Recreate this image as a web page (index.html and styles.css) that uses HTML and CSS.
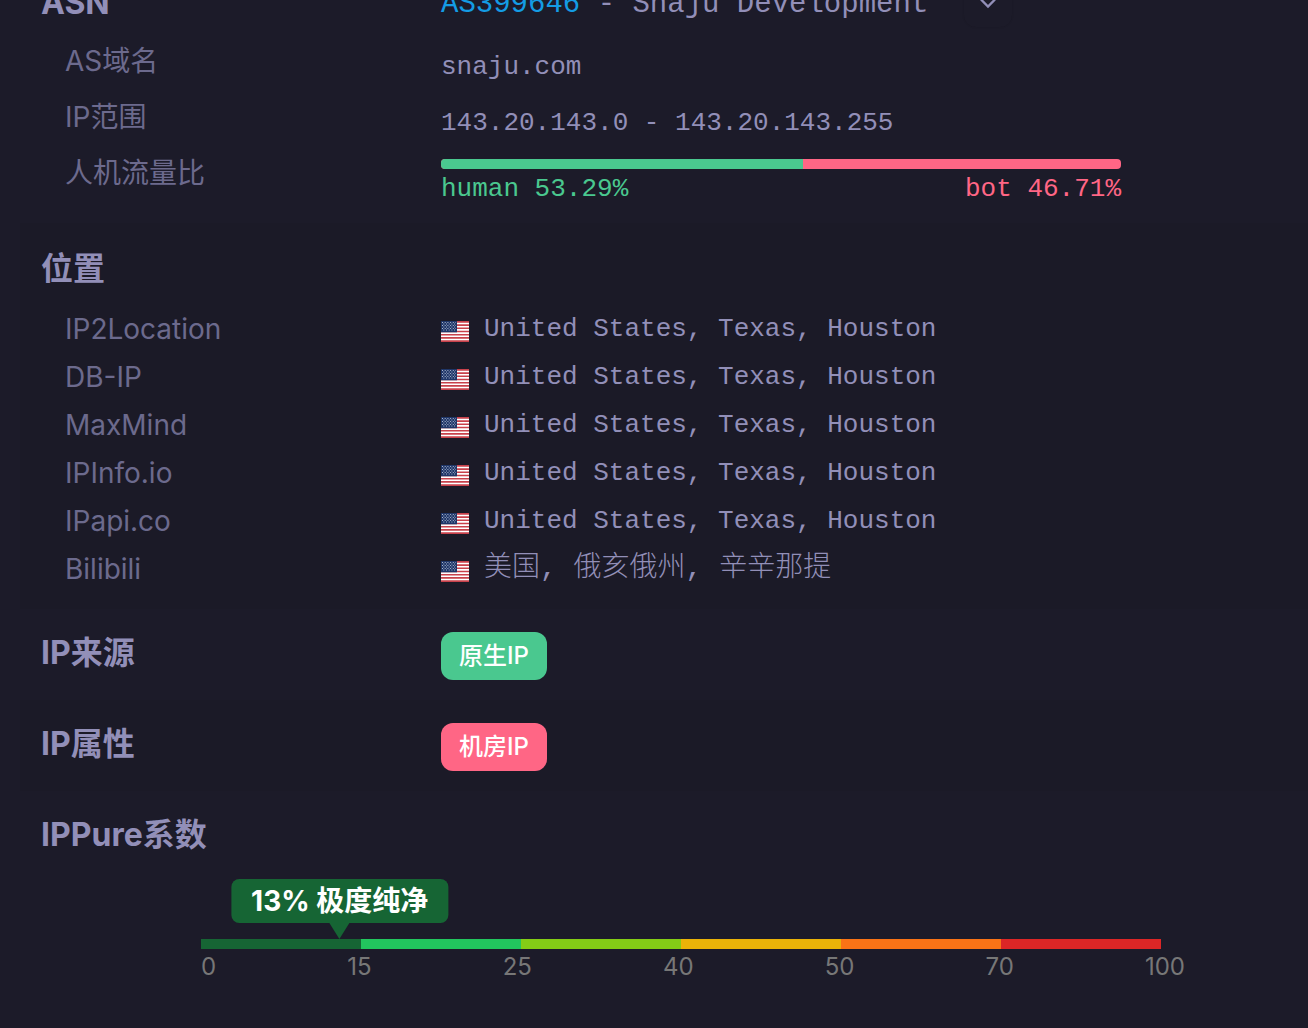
FILE: index.html
```html
<!DOCTYPE html>
<html lang="zh-CN">
<head>
    <meta charset="UTF-8">
    <meta name="viewport" content="width=device-width, initial-scale=1.0">
    <title>IPPure</title>
    <link rel="stylesheet" href="styles.css">
</head>
<body>
    <!-- US flag, used by every location row -->
    <svg class="sprite" aria-hidden="true">
        <symbol id="flag-us" viewBox="0 0 28 21">
            <rect width="28" height="21" fill="#fff"/>
            <path fill="none" stroke="#c8414b" stroke-width="1.7" d="M0 .8h28M0 4.04h28M0 7.27h28M0 10.5h28M0 13.73h28M0 16.96h28M0 20.2h28"/>
            <rect width="16" height="11.3" fill="#1f3668"/>
            <path fill="none" stroke="#a9b5cd" stroke-width="1" stroke-dasharray="1 1.7" d="M1 1.5h14M2.3 3h12M1 4.5h14M2.3 6h12M1 7.5h14M2.3 9h12"/>
        </symbol>
    </svg>

    <main class="panel">
        <!-- ASN -->
        <section class="group">
            <div class="row head">
                <h2>ASN</h2>
                <div class="value asn">
                    <span><a href="#AS399646">AS399646</a> - Snaju Development</span>
                    <button class="toggle" type="button" aria-label="展开">
                        <svg viewBox="0 0 24 24" aria-hidden="true"><path d="M6 9l6 6 6-6"/></svg>
                    </button>
                </div>
            </div>
            <div class="row tall">
                <h3>AS域名</h3>
                <div class="value">snaju.com</div>
            </div>
            <div class="row tall">
                <h3>IP范围</h3>
                <div class="value">143.20.143.0 - 143.20.143.255</div>
            </div>
            <div class="row tall">
                <h3>人机流量比</h3>
                <div class="traffic">
                    <div class="traffic-bar">
                        <div class="human-bar" style="width: 53.29%"></div>
                    </div>
                    <div class="traffic-text">
                        <span class="human">human 53.29%</span>
                        <span class="bot">bot 46.71%</span>
                    </div>
                </div>
            </div>
        </section>

        <!-- Location -->
        <section class="group location">
            <h2>位置</h2>
            <div class="row">
                <h3>IP2Location</h3>
                <div class="value place"><svg class="flag"><use href="#flag-us"/></svg>United States, Texas, Houston</div>
            </div>
            <div class="row">
                <h3>DB-IP</h3>
                <div class="value place"><svg class="flag"><use href="#flag-us"/></svg>United States, Texas, Houston</div>
            </div>
            <div class="row">
                <h3>MaxMind</h3>
                <div class="value place"><svg class="flag"><use href="#flag-us"/></svg>United States, Texas, Houston</div>
            </div>
            <div class="row">
                <h3>IPInfo.io</h3>
                <div class="value place"><svg class="flag"><use href="#flag-us"/></svg>United States, Texas, Houston</div>
            </div>
            <div class="row">
                <h3>IPapi.co</h3>
                <div class="value place"><svg class="flag"><use href="#flag-us"/></svg>United States, Texas, Houston</div>
            </div>
            <div class="row">
                <h3>Bilibili</h3>
                <div class="value place chinese"><svg class="flag"><use href="#flag-us"/></svg>美国, 俄亥俄州, 辛辛那提</div>
            </div>
        </section>

        <!-- Source -->
        <section class="group">
            <div class="row">
                <h2>IP来源</h2>
                <div class="tags"><span class="tag green">原生IP</span></div>
            </div>
        </section>

        <!-- Type -->
        <section class="group">
            <div class="row">
                <h2>IP属性</h2>
                <div class="tags"><span class="tag red">机房IP</span></div>
            </div>
        </section>

        <!-- Score -->
        <section class="group">
            <h2>IPPure系数</h2>
            <div class="score">
                <div class="score-tip" style="margin-left: 14.45%">13% 极度纯净</div>
                <div class="score-bar">
                    <div class="level-1"></div>
                    <div class="level-2"></div>
                    <div class="level-3"></div>
                    <div class="level-4"></div>
                    <div class="level-5"></div>
                    <div class="level-6"></div>
                </div>
                <div class="score-labels">
                    <span>0</span>
                    <span>15</span>
                    <span>25</span>
                    <span>40</span>
                    <span>50</span>
                    <span>70</span>
                    <span>100</span>
                </div>
            </div>
        </section>
    </main>
</body>
</html>
```

FILE: styles.css
```css
/* Global Styles */
* {
    box-sizing: border-box;
}

body {
    margin: 0;
    font-family: Inter, "Noto Sans CJK SC", sans-serif;
    background: #1c1b29;
    color: #928fb8;
    overflow-x: hidden;
}

h2, h3 {
    margin: 0;
}

h2 {
    font-size: 32px;
    font-weight: 700;
    line-height: 48px;
}

h3 {
    padding-left: 24px;
    font-size: 28px;
    font-weight: 400;
    line-height: 48px;
    color: #6c6a8d;
}

a {
    color: #149ce4;
    text-decoration: none;
}

.sprite {
    display: none;
}

/* Panel */
.panel {
    margin-top: -41px;
    margin-left: 20px;
}

.group {
    padding: 20px 20px 20px 21px;
}

.group:nth-child(even) {
    background: #1b1a27;
}

.row {
    display: grid;
    grid-template-columns: 400px 1fr;
}

.value {
    font-family: "Liberation Mono", "Noto Sans CJK SC", monospace;
    font-size: 26px;
    line-height: 48px;
}

/* ASN */
.group:first-child {
    padding-bottom: 14px;
}

.head {
    margin-bottom: 6px;
}

.tall h3,
.tall .value {
    line-height: 56px;
}

.tall .value {
    height: 56px;
    padding-top: 6px;
}

.asn {
    display: flex;
    align-items: center;
    gap: 36px;
    font-size: 29px;
    line-height: 44px;
}

.asn span {
    padding-top: 4px;
}

.toggle {
    display: flex;
    align-items: center;
    justify-content: center;
    width: 48px;
    height: 48px;
    padding: 0;
    border: 0;
    border-radius: 12px;
    background: #1c1b29;
    box-shadow: 0 0 2px rgba(0, 0, 0, 0.15);
    color: inherit;
    cursor: pointer;
}

.toggle svg {
    width: 28px;
    height: 28px;
    fill: none;
    stroke: currentColor;
    stroke-width: 2;
}

.traffic {
    max-width: 680px;
    padding-top: 14px;
}

.traffic-bar {
    height: 10px;
    border-radius: 4px;
    background: #ff6685;
    overflow: hidden;
}

.human-bar {
    height: 100%;
    background: #4ac88f;
}

.traffic-text {
    display: flex;
    justify-content: space-between;
    font-family: "Liberation Mono", monospace;
    font-size: 26px;
    line-height: 40px;
}

.human {
    color: #4ac88f;
}

.bot {
    color: #ff6685;
}

/* Location */
.location {
    padding-top: 22px;
    padding-bottom: 16px;
}

.location h2 {
    margin-bottom: 12px;
}

.place {
    display: flex;
    align-items: center;
    gap: 15px;
}

.chinese {
    font-size: 28px;
    font-weight: 300;
}

.flag {
    width: 28px;
    height: 21px;
    margin-top: 4px;
}

/* Tags */
.tags {
    display: flex;
    padding-top: 3px;
}

.tag {
    padding: 0 18px;
    border-radius: 12px;
    font-size: 24px;
    font-weight: 500;
    line-height: 48px;
    color: #fff;
}

.green {
    background: #4ac88f;
}

.red {
    background: #ff6685;
}

/* Score */
.score {
    max-width: 960px;
    margin: 20px auto 0 160px;
}

.score-tip {
    position: relative;
    width: max-content;
    margin-bottom: 16px;
    padding: 0 20px;
    border-radius: 8px;
    background: #166534;
    color: #fff;
    font-size: 28px;
    font-weight: 700;
    line-height: 44px;
    transform: translateX(-50%);
}

.score-tip::after {
    content: "";
    position: absolute;
    top: 100%;
    left: 50%;
    border: 10px solid transparent;
    border-top: 16px solid #166534;
    border-bottom: 0;
    transform: translateX(-50%);
}

.score-bar {
    display: grid;
    grid-template-columns: repeat(6, 1fr);
    height: 10px;
}

.level-1 { background: #166534; }
.level-2 { background: #22c55e; }
.level-3 { background: #84cc16; }
.level-4 { background: #eab308; }
.level-5 { background: #f97316; }
.level-6 { background: #dc2626; }

.score-labels {
    display: flex;
    justify-content: space-between;
    margin-right: -24px;
    font-size: 24px;
    line-height: 36px;
    color: #777;
}
```
